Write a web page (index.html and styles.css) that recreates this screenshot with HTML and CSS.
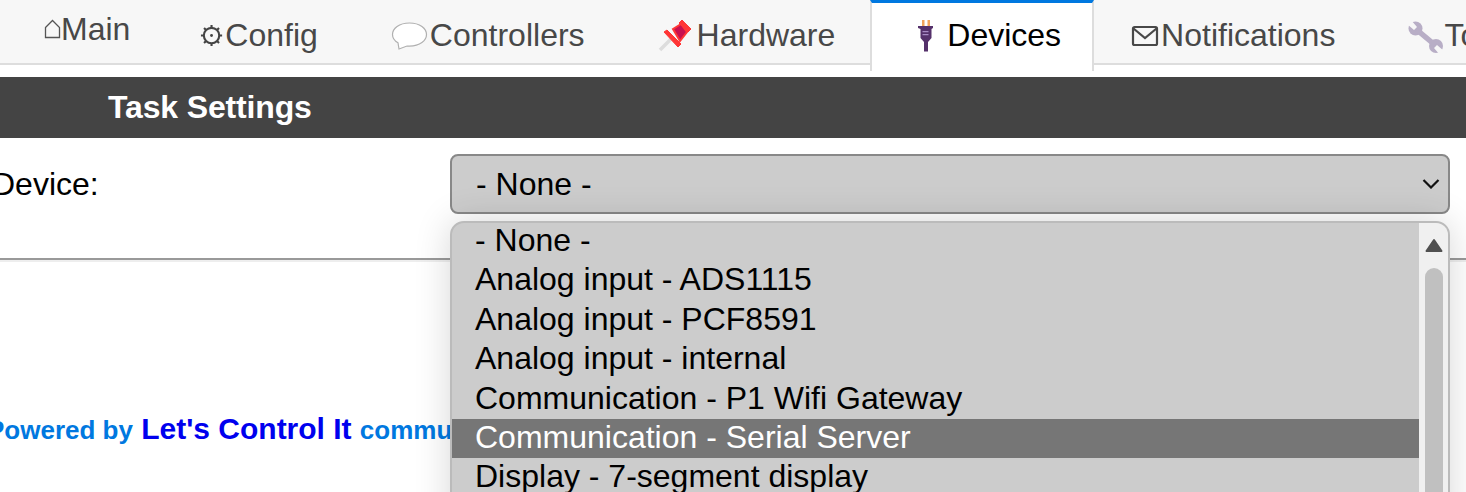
FILE: index.html
```html
<!DOCTYPE html>
<html lang="en">
<head>
<meta charset="utf-8">
<title>Task Settings</title>
<link rel="stylesheet" href="styles.css">
</head>
<body>
<nav class="tabs">
  <a class="tab tab-main"><svg class="ico ico-home" viewBox="0 0 17 20"><path d="M1.500 8.500 8.500 1.500 15.500 8.500V18.500H1.500Z"/></svg>Main</a>
  <a class="tab"><svg class="ico ico-gear" viewBox="0 0 26 26"><circle cx="12" cy="12.500" r="8"/><circle class="dot" cx="12" cy="12.500" r="1.500"/><path d="M12 1.500V4.500M12 20.500V23.500M1 12.500H4M20 12.500H23M4.200 4.700 6.300 6.800M17.700 18.200 19.800 20.300M4.200 20.300 6.300 18.200M17.700 6.800 19.800 4.700"/></svg>Config</a>
  <a class="tab"><svg class="ico ico-bubble" viewBox="0 0 42 28"><path d="M21.500 1C11 1 4.500 6.500 4.500 12.500C4.500 16 6.500 18.800 10 20.800L11 27L19 24C20 24.100 20.800 24.100 21.500 24.100C32 24.100 38.500 18.500 38.500 12.500C38.500 6.500 32 1 21.500 1Z"/></svg>Controllers</a>
  <a class="tab"><svg class="ico ico-pin" viewBox="0 0 42 34"><path class="pin-needle" d="M5 31 17 19"/><path class="pin-core" d="M18 10 26 5 32 13 25 22Z"/><path class="pin-head" d="M24 4 27 1 36 10 33 13ZM9 13 12 11 26 25 23 28Z"/></svg>Hardware</a>
  <a class="tab tab-active"><svg class="ico ico-plug" viewBox="0 0 32 32"><path class="prong" d="M7 0H9.500V7H7ZM12.500 0H15V7H12.500Z"/><path class="plug" d="M3 6H18V8L16.500 9V18L13 22V31.500H9V22L5.500 18V9L3 8Z"/><path class="plug-mark" d="M7.500 11H13.500V12.200H7.500ZM7.500 14H13.500V15.200H7.500Z"/></svg>Devices</a>
  <a class="tab"><svg class="ico ico-mail" viewBox="0 0 32 22"><rect x="4" y="2" width="24" height="18" rx="1.500"/><path d="M4.500 3.500 16 13 27.500 3.500"/></svg>Notifications</a>
  <a class="tab"><svg class="ico ico-wrench" viewBox="0 0 39 34"><circle class="wrench-body" cx="10.500" cy="9.500" r="7"/><circle class="wrench-body" cx="31" cy="27" r="7"/><path class="wrench-shaft" d="M12 11 30 26"/><path class="wrench-notch" d="M9 11 12 8 6 1 2 5ZM32 26 29 29 35 36 39 32Z"/></svg>Tools</a>
</nav>

<h1 class="bar">Task Settings</h1>

<div class="form-row">
  <span class="form-label">Device:</span>
  <div class="select">
    <span>- None -</span>
    <svg class="chevron" viewBox="0 0 18 10"><path d="M1.500 1 9 8.500 16.500 1"/></svg>
  </div>
</div>
<hr class="rule">
<div class="actions"><span class="btn">Submit</span></div>
<p class="credit">Powered by <a class="credit-link">Let's Control It</a> community</p>

<div class="popup">
  <ul class="options">
    <li>- None -</li>
    <li>Analog input - ADS1115</li>
    <li>Analog input - PCF8591</li>
    <li>Analog input - internal</li>
    <li>Communication - P1 Wifi Gateway</li>
    <li class="selected">Communication - Serial Server</li>
    <li>Display - 7-segment display</li>
  </ul>
  <div class="scrollbar">
    <svg class="arrow" viewBox="0 0 18 14"><path d="M9 2 16.500 13H1.500Z"/></svg>
    <div class="thumb"></div>
  </div>
</div>
</body>
</html>
```
FILE: styles.css
```css
* { box-sizing: border-box; }
html, body {
  margin: 0;
  height: 492px;
  overflow: hidden;
}
body {
  position: relative;
  background: #fff;
  color: #000;
  font-family: "Liberation Sans", Arial, sans-serif;
  font-size: 32px;
}
.tabs {
  display: flex;
  height: 65px;
  padding-left: 9px;
  background: #f7f7f7;
  border-bottom: 2px solid #ddd;
  white-space: nowrap;
}
.tab {
  display: flex;
  flex: none;
  align-items: center;
  height: 71px;
  padding: 0 35px;
  color: #484848;
}
.tab-main { padding-bottom: 13px; }
.tab-active {
  padding: 0 31px 3px 43px;
  background: #fff;
  color: #000;
  border-top: 3px solid #0078e0;
  border-left: 2px solid #ddd;
  border-right: 2px solid #ddd;
}
.ico { display: block; flex: none; }
.ico-home { width: 17px; height: 20px; fill: none; stroke: #555; stroke-width: 1.300; }
.ico-gear { width: 25px; height: 26px; fill: none; stroke: #444; stroke-width: 2.200; }
.ico-gear .dot { fill: #444; stroke: none; }
.ico-bubble { width: 42px; height: 28px; fill: #fff; stroke: #b0b0b0; stroke-width: 1.200; }
.ico-pin { width: 42px; height: 34px; }
.pin-needle { fill: none; stroke: #ddd; stroke-width: 3.500; }
.pin-head { fill: #ff3636; stroke: #ff3636; stroke-width: 1; stroke-linejoin: round; }
.pin-core { fill: #c8104f; stroke: #ff3636; stroke-width: 2; }
.ico-plug { width: 32px; height: 32px; }
.prong { fill: #f2a45c; }
.plug { fill: #55316b; }
.plug-mark { fill: #a88bc4; }
.ico-mail { width: 32px; height: 22px; fill: none; stroke: #484848; stroke-width: 2.200; }
.ico-wrench { width: 39px; height: 34px; }
.wrench-body { fill: #b8aec6; }
.wrench-shaft { fill: none; stroke: #b8aec6; stroke-width: 5.500; }
.wrench-notch { fill: #f7f7f7; }
.bar {
  height: 61px;
  margin: 12px 0 0;
  padding-left: 108px;
  background: #444;
  color: #fff;
  font-size: 32px;
  font-weight: 700;
  letter-spacing: -.15px;
  line-height: 60px;
}
.form-row {
  display: grid;
  grid-template-columns: 458px 1000px;
  align-items: center;
  margin: 16px 0 0 -8px;
}
.select {
  display: flex;
  align-items: center;
  justify-content: space-between;
  height: 60px;
  padding: 0 8px 0 24px;
  background: #ccc;
  border: 2px solid #888;
  border-radius: 8px;
}
.chevron { width: 18px; height: 10px; fill: none; stroke: #111; stroke-width: 2.200; }
.rule {
  height: 4px;
  margin: 44px 0 0;
  border: 0;
  border-top: 2px solid #999;
  border-bottom: 2px solid #eee;
}
.actions { margin: 46px 0 0 450px; }
.btn {
  display: block;
  width: 200px;
  height: 48px;
  background: #3a7fc0;
  border-radius: 6px;
  color: #fff;
}
.credit {
  margin: 55px 0 0 -13px;
  color: #0078e0;
  font-size: 26px;
  font-weight: 700;
  line-height: 36px;
  white-space: nowrap;
}
.credit-link { margin: 0 1px; color: #0000ee; font-size: 30px; }
.popup {
  position: absolute;
  left: 450px;
  top: 221px;
  width: 1000px;
  height: 320px;
  display: flex;
  background: #ccc;
  border: 2px solid #bbb;
  border-radius: 14px 14px 0 0;
  box-shadow: 0 0 36px rgba(0, 0, 0, .16);
  overflow: hidden;
}
.options {
  flex: 1;
  margin: -1px 0 0;
  padding: 0;
  list-style: none;
  line-height: 37.400px;
}
.options li { padding: 0 0 2px 23px; white-space: nowrap; }
.options .selected { background: #767676; color: #fff; }
.scrollbar {
  display: flex;
  flex: none;
  flex-direction: column;
  align-items: center;
  width: 29px;
  padding-top: 15px;
  background: #f0f0f0;
}
.arrow { width: 18px; height: 14px; fill: #505050; stroke: #505050; stroke-width: 2; stroke-linejoin: round; }
.thumb { width: 18px; height: 260px; margin-top: 16px; background: #c0c0c0; border-radius: 9px; }
```
